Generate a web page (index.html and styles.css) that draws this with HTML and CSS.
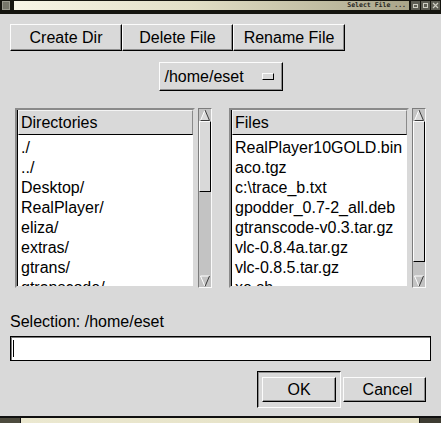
FILE: index.html
```html
<!DOCTYPE html>
<html>
<head>
<meta charset="utf-8">
<title>Select File</title>
<link rel="stylesheet" href="styles.css">
</head>
<body>
<div class="screen">
  <div class="titlebar">
    <div class="tb-icon"></div>
    <div class="tb-band"><span class="tb-title">Select File ...</span></div>
    <div class="tb-btns">
      <span class="tb-btn"><svg width="9" height="9" viewBox="0 0 9 9"><rect x="2.5" y="3.5" width="4" height="3" fill="none" stroke="#cfcfc4"/></svg></span>
      <span class="tb-btn"><svg width="9" height="9" viewBox="0 0 9 9"><rect x="2.5" y="2.5" width="4" height="4" fill="none" stroke="#cfcfc4"/></svg></span>
      <span class="tb-btn"><svg width="9" height="9" viewBox="0 0 9 9"><path d="M2 2 L7 7 M7 2 L2 7" stroke="#cfcfc4" stroke-width="1.2"/></svg></span>
    </div>
  </div>

  <div class="dialog">
    <div class="toolbar">
      <div class="btn">Create Dir</div>
      <div class="btn">Delete File</div>
      <div class="btn">Rename File</div>
    </div>

    <div class="path-row">
      <div class="menubtn"><span>/home/eset</span><span class="indicator"></span></div>
    </div>

    <div class="lists">
      <div class="pane">
        <div class="listbox">
          <div class="lb-head">Directories</div>
          <ul class="lb-items">
            <li>./</li>
            <li>../</li>
            <li>Desktop/</li>
            <li>RealPlayer/</li>
            <li>eliza/</li>
            <li>extras/</li>
            <li>gtrans/</li>
            <li>gtranscode/</li>
          </ul>
        </div>
        <div class="scrollbar">
          <div class="arrow"><svg width="12" height="12" viewBox="0 0 12 12"><path d="M1.5 11.5 L6 1 L10.5 11.5 Z" fill="#d9d9d9"/><path d="M1.5 11.5 L6 1" stroke="#fff" fill="none"/><path d="M6 1 L10.5 11.5 L1.5 11.5" stroke="#3a3a3a" fill="none"/></svg></div>
          <div class="thumb" style="height:71px"></div>
          <div class="trough"></div>
          <div class="arrow"><svg width="12" height="12" viewBox="0 0 12 12"><path d="M1.5 1 L10.5 1 L6 11.5 Z" fill="#c3c3c3"/><path d="M6 11.5 L1.5 1 L10.5 1" stroke="#fff" fill="none"/><path d="M10.5 1 L6 11.5" stroke="#3a3a3a" fill="none"/></svg></div>
        </div>
      </div>

      <div class="pane pane-files">
        <div class="listbox">
          <div class="lb-head">Files</div>
          <ul class="lb-items">
            <li>RealPlayer10GOLD.bin</li>
            <li>aco.tgz</li>
            <li>c:\trace_b.txt</li>
            <li>gpodder_0.7-2_all.deb</li>
            <li>gtranscode-v0.3.tar.gz</li>
            <li>vlc-0.8.4a.tar.gz</li>
            <li>vlc-0.8.5.tar.gz</li>
            <li>xe.sh</li>
          </ul>
        </div>
        <div class="scrollbar">
          <div class="arrow"><svg width="12" height="12" viewBox="0 0 12 12"><path d="M1.5 11.5 L6 1 L10.5 11.5 Z" fill="#d9d9d9"/><path d="M1.5 11.5 L6 1" stroke="#fff" fill="none"/><path d="M6 1 L10.5 11.5 L1.5 11.5" stroke="#3a3a3a" fill="none"/></svg></div>
          <div class="thumb" style="height:141px"></div>
          <div class="trough"></div>
          <div class="arrow"><svg width="12" height="12" viewBox="0 0 12 12"><path d="M1.5 1 L10.5 1 L6 11.5 Z" fill="#c3c3c3"/><path d="M6 11.5 L1.5 1 L10.5 1" stroke="#fff" fill="none"/><path d="M10.5 1 L6 11.5" stroke="#3a3a3a" fill="none"/></svg></div>
        </div>
      </div>
    </div>

    <div class="sel-label">Selection: /home/eset</div>
    <div class="entry"><span class="caret"></span></div>

    <div class="actions">
      <div class="default-ring"><div class="btn btn-ok">OK</div></div>
      <div class="btn btn-cancel">Cancel</div>
    </div>
  </div>

  <div class="bottom-frame">
    <div class="bf-left"></div>
    <div class="bf-mid"></div>
    <div class="bf-right"></div>
  </div>
</div>
</body>
</html>
```

FILE: styles.css
```css
* {
  box-sizing: border-box;
  margin: 0;
  padding: 0;
}

html, body {
  width: 441px;
  height: 423px;
  overflow: hidden;
}

body {
  font-family: "Liberation Sans", Arial, sans-serif;
  font-size: 16px;
  color: #000;
  background: #d9d9d9;
}

.screen {
  width: 441px;
  height: 423px;
  display: flex;
  flex-direction: column;
}

/* ---- title bar ---- */
.titlebar {
  flex: none;
  height: 14px;
  background: #15150f;
  display: flex;
  align-items: flex-start;
  padding-top: 1px;
}

.tb-icon {
  width: 8px;
  height: 9px;
  margin-left: 2px;
  background: #77776b;
  border: 1px solid #9b9b8f;
}

.tb-band {
  width: 395px;
  height: 9px;
  margin-left: 4px;
  background: linear-gradient(to right, #f7f5e6 0%, #e2dfc6 45%, #a9a589 100%);
  display: flex;
  justify-content: flex-end;
  align-items: center;
  padding-right: 3px;
}

.tb-title {
  font-family: "DejaVu Sans Mono", "Liberation Mono", monospace;
  font-size: 6.5px;
  font-weight: bold;
  line-height: 9px;
  color: #26261e;
  white-space: pre;
}

.tb-btns {
  display: flex;
  gap: 1px;
  margin-left: 2px;
}

.tb-btn {
  width: 9px;
  height: 9px;
  background: #5d5d53;
  display: flex;
}

/* ---- dialog ---- */
.dialog {
  flex: 1;
  display: flex;
  flex-direction: column;
  padding: 10px 10px 0;
}

.btn {
  background: #d9d9d9;
  border: 1px solid;
  border-color: #fcfcfc #000 #000 #fcfcfc;
  box-shadow: inset -1px -1px 0 #8e8e8e;
  text-align: center;
  line-height: 25px;
  white-space: nowrap;
}

.toolbar {
  display: grid;
  grid-template-columns: 112px 111px 112px;
  height: 27px;
}

.path-row {
  margin-top: 11px;
  display: flex;
  justify-content: center;
}

.menubtn {
  width: 124px;
  height: 29px;
  display: flex;
  align-items: center;
  padding-left: 5px;
  padding-right: 8px;
  background: #d9d9d9;
  border: 1px solid;
  border-color: #fcfcfc #000 #000 #fcfcfc;
  box-shadow: inset -1px -1px 0 #8e8e8e;
}

.indicator {
  width: 12px;
  height: 7px;
  margin-left: auto;
  border: 1px solid;
  border-color: #fcfcfc #000 #000 #fcfcfc;
  background: #d9d9d9;
}

/* ---- lists ---- */
.lists {
  margin-top: 17px;
  height: 180px;
  display: flex;
  padding-left: 5px;
}

.pane {
  display: flex;
  gap: 3px;
  height: 180px;
}

.pane-files {
  margin-left: 17px;
}

.listbox {
  width: 180px;
  height: 180px;
  border: 2px solid;
  border-color: #8a8a8a #d9d9d9 #d9d9d9 #8a8a8a;
  box-shadow: inset 1px 1px 0 #000;
  background: #fff;
  overflow: hidden;
  display: flex;
  flex-direction: column;
}

.lb-head {
  flex: none;
  height: 25px;
  line-height: 23px;
  padding-left: 2px;
  margin-left: 1px;
  background: #d9d9d9;
  border: 1px solid;
  border-color: #f4f4f4 #8a8a8a #000 #f4f4f4;
  margin-top: 1px;
  margin-top: 0;
}

.lb-items {
  list-style: none;
  padding-top: 3px;
  padding-left: 4px;
  line-height: 20px;
  white-space: nowrap;
}

.scrollbar {
  width: 14px;
  height: 180px;
  border: 1px solid;
  border-color: #7c7c7c #fafafa #fafafa #7c7c7c;
  background: #c3c3c3;
  display: flex;
  flex-direction: column;
}

.arrow {
  height: 12px;
  flex: none;
  display: flex;
}

.thumb {
  flex: none;
  background: #d9d9d9;
  border: 1px solid;
  border-color: #fcfcfc #000 #000 #fcfcfc;
}

.trough {
  flex: 1;
}

/* ---- selection ---- */
.sel-label {
  margin-top: 24px;
  line-height: 20px;
}

.entry {
  margin-top: 4px;
  height: 25px;
  width: 421px;
  background: #fff;
  border: 1px solid #000;
  box-shadow: inset 1px 1px 0 #7a7a7a;
  display: flex;
  padding: 3px 0 0 2px;
}

.caret {
  width: 1px;
  height: 17px;
  background: #000;
}

/* ---- actions ---- */
.actions {
  margin-top: 10px;
  display: flex;
  justify-content: flex-end;
  align-items: center;
  padding-right: 5px;
}

.default-ring {
  width: 84px;
  height: 37px;
  padding: 5px 4px;
  border: 1px solid;
  border-color: #000 #fcfcfc #fcfcfc #000;
  box-shadow: inset 1px 1px 0 #8e8e8e;
}

.btn-ok {
  width: 74px;
  height: 25px;
  line-height: 23px;
}

.btn-cancel {
  width: 83px;
  height: 25px;
  line-height: 23px;
  margin-left: 2px;
  padding-left: 6px;
}

/* ---- window frame below ---- */
.bottom-frame {
  flex: none;
  height: 7px;
  border-top: 2px solid #101010;
  display: flex;
}

.bf-left {
  width: 21px;
  background: #4d4b3e;
  border-right: 1px solid #111;
}

.bf-mid {
  flex: 1;
  background: linear-gradient(to right, #ebe8d0, #e4e0c4);
}

.bf-right {
  width: 22px;
  background: #3e3c32;
  border-left: 1px solid #111;
}
```
